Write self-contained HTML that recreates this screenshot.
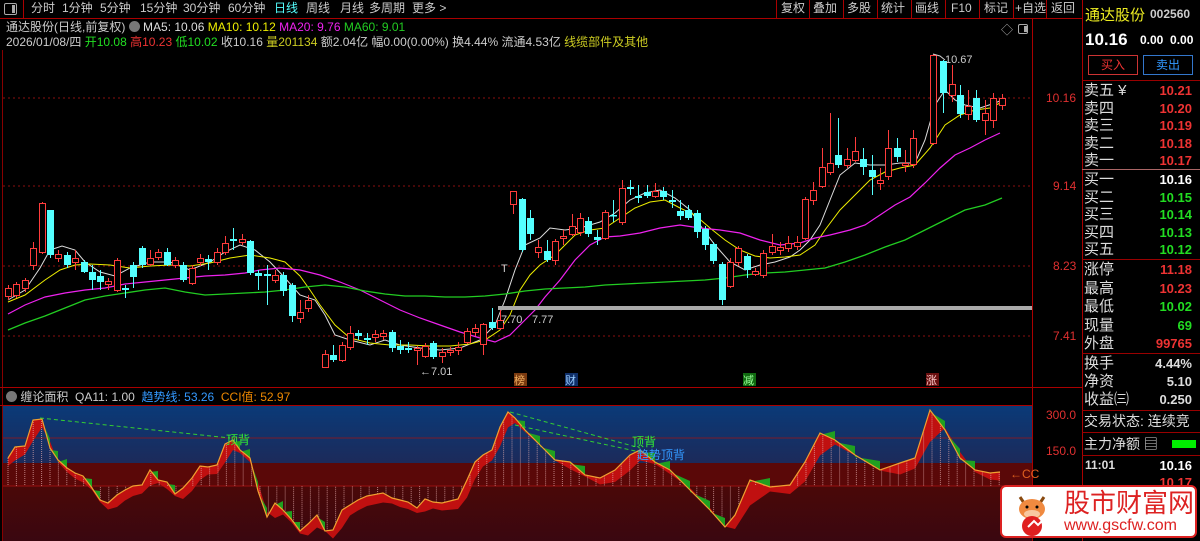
<!DOCTYPE html>
<html><head><meta charset="utf-8">
<style>
*{margin:0;padding:0;box-sizing:border-box}
body{width:1200px;height:541px;background:#000;overflow:hidden;position:relative;font-family:"Liberation Sans","Noto Sans CJK SC",sans-serif;font-size:12px;color:#ccc}
.a{position:absolute;white-space:nowrap}
.tb{position:absolute;top:0;height:18px;line-height:17px;font-size:12px;color:#ccc}
.rp div{position:absolute;white-space:nowrap}
.lab{left:1084px;font-size:15px;color:#ddd;line-height:17px}
.val{right:8px;font-size:13px;font-weight:bold;text-align:right;line-height:17px}
.sep{left:1082px;width:118px;height:1px;background:#900}
</style></head><body>
<svg id="ch" width="1200" height="541" style="position:absolute;left:0;top:0">
<defs>
<linearGradient id="bg1" x1="0" y1="0" x2="0" y2="1"><stop offset="0" stop-color="#0a3a78"/><stop offset="1" stop-color="#1c2a5a"/></linearGradient>
<linearGradient id="bg2" x1="0" y1="0" x2="0" y2="1"><stop offset="0" stop-color="#4a0808"/><stop offset="1" stop-color="#3a0710"/></linearGradient>
</defs>
<line x1="0" y1="18.5" x2="1082" y2="18.5" stroke="#a00" />
<line x1="1032.5" y1="18" x2="1032.5" y2="541" stroke="#a00"/>
<line x1="1082.5" y1="0" x2="1082.5" y2="541" stroke="#a00"/>
<line x1="2.5" y1="50" x2="2.5" y2="541" stroke="#800"/>
<line x1="0" y1="387.5" x2="1082" y2="387.5" stroke="#a00"/>
<line x1="0" y1="405.5" x2="1032" y2="405.5" stroke="#a00"/>
<g stroke="#8a1010" stroke-dasharray="2,3">
<line x1="3" y1="98" x2="1032" y2="98"/><line x1="3" y1="186" x2="1032" y2="186"/>
<line x1="3" y1="266" x2="1032" y2="266"/><line x1="3" y1="336" x2="1032" y2="336"/>
</g>
<g fill="#e03030" font-size="12">
<text x="1046" y="102">10.16</text><text x="1053" y="190">9.14</text><text x="1053" y="270">8.23</text><text x="1053" y="340">7.41</text>
<text x="1046" y="419">300.0</text><text x="1046" y="455">150.0</text>
</g>
<rect x="3" y="406" width="1029" height="57" fill="url(#bg1)"/>
<rect x="3" y="463" width="1029" height="23" fill="#5a0808"/>
<rect x="3" y="486" width="1029" height="55" fill="url(#bg2)"/>
<line x1="3" y1="438" x2="1032" y2="438" stroke="#7a1a2a"/>
<line x1="3" y1="486" x2="1032" y2="486" stroke="#9a1010"/>
<g id="ind"></g>
<g id="mas" fill="none"></g>
<g id="cdl"></g>
<rect x="498" y="306" width="534" height="4" fill="#aaa"/>
<g fill="#ccc" font-size="11">
<text x="420" y="375">←7.01</text><text x="501" y="323">7.70</text><text x="532" y="323">7.77</text>
<text x="945" y="63">10.67</text><text x="501" y="272">T</text>
</g>
<polyline points="933,54 940,56 945,60" stroke="#ccc" fill="none"/>
<g font-size="11">
<rect x="514" y="373" width="13" height="13" fill="#7a3a10"/><text x="514" y="384" fill="#f0b060">榜</text>
<rect x="565" y="373" width="13" height="13" fill="#10306a"/><text x="565" y="384" fill="#9cf">财</text>
<rect x="743" y="373" width="13" height="13" fill="#106a10"/><text x="743" y="384" fill="#9f9">减</text>
<rect x="926" y="373" width="13" height="13" fill="#6a1010"/><text x="926" y="384" fill="#fcc">涨</text>
</g>
<g font-size="12"><text x="1010" y="478" fill="#e06020">←CC</text></g>
</svg>

<div class="a" style="left:4px;top:3px;width:13px;height:12px;border:1px solid #aaa;border-radius:2px"><div class="a" style="left:7px;top:1px;width:3px;height:8px;background:#aaa"></div></div>
<div class="a" style="left:23px;top:0;width:1px;height:18px;background:#a00"></div>
<div class="tb" style="left:31px">分时</div><div class="tb" style="left:62px">1分钟</div><div class="tb" style="left:100px">5分钟</div><div class="tb" style="left:140px">15分钟</div><div class="tb" style="left:183px">30分钟</div><div class="tb" style="left:228px">60分钟</div><div class="tb" style="left:274px;color:#5ff">日线</div><div class="tb" style="left:306px">周线</div><div class="tb" style="left:340px">月线</div><div class="tb" style="left:369px">多周期</div><div class="tb" style="left:412px">更多 &gt;</div>
<div class="tb" style="left:776px;width:306px;height:19px;border-bottom:1px solid #a00"></div>
<div class="tb" style="left:781px">复权</div><div class="tb" style="left:813px">叠加</div><div class="tb" style="left:847px">多股</div><div class="tb" style="left:881px">统计</div><div class="tb" style="left:915px">画线</div><div class="tb" style="left:951px">F10</div><div class="tb" style="left:984px">标记</div><div class="tb" style="left:1015px">+自选</div><div class="tb" style="left:1051px">返回</div>
<div class="a" style="left:776px;top:0;width:1px;height:18px;background:#a00"></div><div class="a" style="left:809px;top:0;width:1px;height:18px;background:#a00"></div><div class="a" style="left:843px;top:0;width:1px;height:18px;background:#a00"></div><div class="a" style="left:877px;top:0;width:1px;height:18px;background:#a00"></div><div class="a" style="left:911px;top:0;width:1px;height:18px;background:#a00"></div><div class="a" style="left:945px;top:0;width:1px;height:18px;background:#a00"></div><div class="a" style="left:979px;top:0;width:1px;height:18px;background:#a00"></div><div class="a" style="left:1013px;top:0;width:1px;height:18px;background:#a00"></div><div class="a" style="left:1046px;top:0;width:1px;height:18px;background:#a00"></div>
<div class="a" style="left:1001px;top:21px;color:#aaa;font-size:12px">◇</div>
<div class="a" style="left:1018px;top:24px;width:10px;height:10px;border:1px solid #aaa;border-radius:2px"><div class="a" style="left:5px;top:1px;width:3px;height:6px;background:#aaa"></div></div>

<div class="a" style="left:6px;top:19px;font-size:12px;line-height:16px">通达股份(日线,前复权) <span style="display:inline-block;width:11px;height:11px;border-radius:6px;background:#777;vertical-align:-1px"></span> <span style="color:#ddd">MA5: 10.06</span> <span style="color:#ee0">MA10: 10.12</span> <span style="color:#e2e">MA20: 9.76</span> <span style="color:#2c2">MA60: 9.01</span></div>
<div class="a" style="left:6px;top:35px;font-size:12px;line-height:15px;color:#ccc">2026/01/08/四 <span style="color:#2d2">开10.08</span> <span style="color:#e33">高10.23</span> <span style="color:#2d2">低10.02</span> 收10.16 <span style="color:#cc2">量201134</span> 额2.04亿 幅0.00(0.00%) 换4.44% 流通4.53亿 <span style="color:#cc2">线缆部件及其他</span></div>

<div class="a" style="left:6px;top:390px;font-size:12px;line-height:14px;color:#ccc"><span style="display:inline-block;width:11px;height:11px;border-radius:6px;background:#777;vertical-align:-1px"></span> 缠论面积 &nbsp;QA11: 1.00 &nbsp;<span style="color:#39f">趋势线: 53.26</span> &nbsp;<span style="color:#e80">CCI值: 52.97</span></div>
<div class="a" style="left:226px;top:431px;color:#3e3;font-size:12px">顶背</div>
<div class="a" style="left:632px;top:433px;color:#3e3;font-size:12px">顶背</div>
<div class="a" style="left:637px;top:446px;color:#39f;font-size:12px">趋势顶背</div>

<div class="rp">
<div style="left:1085px;top:4px;font-size:15px;color:#ee2">通达股份</div>
<div style="left:1150px;top:7px;font-size:12px;color:#ccc;font-weight:bold">002560</div>
<div style="left:1085px;top:30px;font-size:17px;color:#fff;font-weight:bold">10.16</div>
<div style="left:1140px;top:33px;font-size:12px;color:#fff;font-weight:bold">0.00 &nbsp;0.00</div>
<div style="left:1088px;top:55px;width:50px;height:20px;border:1px solid #c33;color:#e33;text-align:center;line-height:18px;font-size:12px">买入</div>
<div style="left:1143px;top:55px;width:50px;height:20px;border:1px solid #37c;color:#39f;text-align:center;line-height:18px;font-size:12px">卖出</div>
<div class="sep" style="top:80px"></div>
<div class="lab" style="top:82px">卖五 ¥</div><div class="val" style="top:82px;color:#e33">10.21</div>
<div class="lab" style="top:100px">卖四</div><div class="val" style="top:100px;color:#e33">10.20</div>
<div class="lab" style="top:117px">卖三</div><div class="val" style="top:117px;color:#e33">10.19</div>
<div class="lab" style="top:135px">卖二</div><div class="val" style="top:135px;color:#e33">10.18</div>
<div class="lab" style="top:152px">卖一</div><div class="val" style="top:152px;color:#e33">10.17</div>
<div class="sep" style="top:169px;background:#a66"></div>
<div class="lab" style="top:171px">买一</div><div class="val" style="top:171px;color:#fff">10.16</div>
<div class="lab" style="top:189px">买二</div><div class="val" style="top:189px;color:#2d2">10.15</div>
<div class="lab" style="top:206px">买三</div><div class="val" style="top:206px;color:#2d2">10.14</div>
<div class="lab" style="top:224px">买四</div><div class="val" style="top:224px;color:#2d2">10.13</div>
<div class="lab" style="top:241px">买五</div><div class="val" style="top:241px;color:#2d2">10.12</div>
<div class="sep" style="top:259px"></div>
<div class="lab" style="top:261px">涨停</div><div class="val" style="top:261px;color:#e33">11.18</div>
<div class="lab" style="top:280px">最高</div><div class="val" style="top:280px;color:#e33">10.23</div>
<div class="lab" style="top:298px">最低</div><div class="val" style="top:298px;color:#2d2">10.02</div>
<div class="lab" style="top:317px">现量</div><div class="val" style="top:317px;color:#2d2">69</div>
<div class="lab" style="top:335px">外盘</div><div class="val" style="top:335px;color:#e33">99765</div>
<div class="sep" style="top:353px"></div>
<div class="lab" style="top:355px">换手</div><div class="val" style="top:355px;color:#ddd">4.44%</div>
<div class="lab" style="top:373px">净资</div><div class="val" style="top:373px;color:#ddd">5.10</div>
<div class="lab" style="top:391px">收益㈢</div><div class="val" style="top:391px;color:#ddd">0.250</div>
<div class="sep" style="top:410px"></div>
<div class="lab" style="top:413px;font-size:14px">交易状态: 连续竞</div>
<div class="sep" style="top:432px"></div>
<div class="lab" style="top:436px;font-size:14px">主力净额 ▤</div>
<div style="left:1172px;top:440px;width:24px;height:8px;background:#0e0"></div>
<div class="sep" style="top:455px"></div>
<div style="left:1085px;top:458px;font-size:12px;color:#ddd;font-weight:bold">11:01</div><div class="val" style="top:457px;color:#fff">10.16</div>
<div class="val" style="top:474px;color:#e33">10.17</div>
</div>

<div class="a" style="left:1000px;top:485px;width:197px;height:53px;background:#fff;border:2px solid #d22;border-radius:6px">
<svg width="44" height="48" style="position:absolute;left:8px;top:2px">
<path d="M10 8 L14 14 M34 8 L30 14" stroke="#8a4a10" stroke-width="3" fill="none"/>
<ellipse cx="22" cy="20" rx="13" ry="10" fill="#f08a40"/>
<ellipse cx="22" cy="25" rx="8" ry="4" fill="#f8c8a0"/>
<circle cx="17" cy="18" r="1.5" fill="#000"/><circle cx="27" cy="18" r="1.5" fill="#000"/>
<circle cx="22" cy="37" r="10" fill="#e02020"/>
<path d="M18 38 L24 32 L28 36 L36 28" stroke="#fff" stroke-width="2" fill="none"/>
</svg>
<div class="a" style="left:62px;top:1px;font-size:26px;color:#d22;line-height:30px">股市财富网</div>
<div class="a" style="left:62px;top:30px;font-size:16px;color:#d22;line-height:18px">www.gscfw.com</div>
</div>

<script>
(function(){
var NS="http://www.w3.org/2000/svg";
function el(p,t,a){var e=document.createElementNS(NS,t);for(var k in a)e.setAttribute(k,a[k]);p.appendChild(e);return e;}
var C=[[8,288,296,285,300,'r'],[16,284,295,282,298,'r'],[25,280,288,278,292,'r'],[33,248,265,242,270,'r'],[42,203,252,202,254,'r'],[50,210,255,210,258,'c'],[58,254,258,250,262,'r'],[67,255,265,252,268,'c'],[75,258,262,250,270,'r'],[84,262,272,260,273,'c'],[92,272,280,265,290,'c'],[100,276,282,270,290,'c'],[108,281,284,278,290,'r'],[117,260,290,258,292,'r'],[125,288,290,285,298,'c'],[133,265,277,262,288,'c'],[142,248,265,246,268,'c'],[150,258,264,250,266,'r'],[158,252,257,249,260,'r'],[167,252,265,248,266,'c'],[175,260,265,257,268,'r'],[183,265,280,262,282,'c'],[192,268,283,265,285,'r'],[200,258,262,254,266,'r'],[208,259,262,255,270,'c'],[217,252,262,248,265,'r'],[225,243,252,236,255,'r'],[233,239,241,228,250,'c'],[242,239,242,234,245,'r'],[250,241,273,240,275,'c'],[258,273,276,270,290,'c'],[267,274,276,265,305,'c'],[275,275,280,270,283,'r'],[283,275,291,272,296,'c'],[292,285,316,283,322,'c'],[300,312,318,300,323,'r'],[308,300,308,295,312,'r'],[325,354,367,350,368,'r'],[333,355,360,345,362,'c'],[342,345,360,342,362,'r'],[350,333,347,326,350,'r'],[358,333,336,330,340,'c'],[367,338,340,333,345,'c'],[375,334,337,330,342,'r'],[383,333,336,330,340,'r'],[392,332,348,330,352,'c'],[400,346,350,340,354,'c'],[408,348,350,342,353,'c'],[417,348,350,346,365,'r'],[425,346,356,343,358,'r'],[433,343,357,341,359,'c'],[442,352,356,348,363,'r'],[450,350,352,347,356,'r'],[458,347,350,342,355,'r'],[467,331,342,328,344,'r'],[475,328,332,324,336,'r'],[483,324,344,323,355,'r'],[492,322,328,308,330,'c'],[500,320,328,310,330,'r'],[513,191,204,191,214,'r'],[522,199,250,198,252,'c'],[530,218,234,210,240,'c'],[538,247,252,240,258,'r'],[547,251,260,240,262,'c'],[555,241,260,239,265,'r'],[563,236,238,230,245,'r'],[572,226,234,214,236,'r'],[580,218,232,213,236,'r'],[588,221,234,217,237,'c'],[597,237,240,230,245,'c'],[605,212,238,210,240,'r'],[613,215,216,200,222,'c'],[622,188,222,180,225,'r'],[630,187,189,180,195,'c'],[638,196,198,185,203,'c'],[647,192,196,185,198,'c'],[655,191,196,183,198,'r'],[663,191,197,187,200,'c'],[672,200,202,190,208,'c'],[680,211,216,200,220,'c'],[688,210,218,205,220,'c'],[697,213,232,210,238,'c'],[705,229,245,226,250,'c'],[713,244,261,242,264,'c'],[722,264,300,262,305,'c'],[730,262,286,258,288,'r'],[738,248,262,246,266,'r'],[747,256,270,254,278,'c'],[755,271,274,268,276,'r'],[763,253,275,250,278,'r'],[772,246,252,234,255,'r'],[780,247,250,242,255,'r'],[788,243,248,236,252,'r'],[797,242,246,236,250,'r'],[805,199,238,197,240,'r'],[813,190,200,182,205,'r'],[822,167,186,148,188,'r'],[830,163,172,113,175,'r'],[838,155,165,118,168,'c'],[847,159,165,148,168,'r'],[855,151,160,137,162,'r'],[863,159,167,148,175,'c'],[872,170,177,155,195,'c'],[880,180,183,168,190,'r'],[888,148,176,130,180,'r'],[897,148,157,138,162,'c'],[905,163,165,150,172,'r'],[913,138,164,130,168,'r'],[933,55,143,54,145,'r'],[943,61,93,60,113,'c'],[952,84,95,65,102,'r'],[960,95,114,85,118,'c'],[968,106,114,90,120,'r'],[976,98,120,90,122,'c'],[985,113,120,100,135,'r'],[993,98,120,93,128,'r'],[1002,98,105,94,110,'r']];
var g=document.getElementById('cdl');
C.forEach(function(c){var col=c[5]=='r'?'#ff3c3c':'#54ffff';
el(g,'line',{x1:c[0]+.5,x2:c[0]+.5,y1:c[3],y2:c[4],stroke:col});
if(c[5]=='r')el(g,'rect',{x:c[0]-2.5,y:c[1]+.5,width:6,height:Math.max(1,c[2]-c[1]),fill:'#000',stroke:col});
else el(g,'rect',{x:c[0]-3,y:c[1],width:7,height:Math.max(1.5,c[2]-c[1]),fill:col});});
var m=document.getElementById('mas');
function pl(pts,col,w){el(m,'polyline',{points:pts,stroke:col,'stroke-width':w||1});}
pl("8,300 25,290 40,268 50,250 62,246 75,250 85,262 100,272 115,276 130,268 150,262 170,262 190,270 210,262 225,252 240,245 255,250 270,262 285,278 300,295 315,300 325,315 335,335 350,340 370,345 385,340 400,345 420,348 440,350 460,348 480,340 495,325 505,300 515,270 525,245 540,238 550,228 565,230 580,228 600,222 615,213 630,200 645,193 660,190 675,198 690,210 700,225 715,245 730,262 745,270 760,265 775,262 790,257 800,250 810,240 820,225 830,200 840,175 855,163 870,165 885,165 900,163 915,163 925,140 935,105 945,90 955,100 965,105 980,108 995,103 1002,100","#ddd");
pl("8,302 25,295 45,280 60,270 75,265 90,264 110,265 130,268 150,266 170,265 190,266 210,263 230,258 250,255 270,258 285,262 300,276 310,290 320,305 335,325 350,338 370,343 390,345 410,345 430,346 450,346 470,344 485,340 500,330 510,315 520,290 530,275 540,265 555,255 565,245 575,235 590,230 605,228 620,218 635,208 650,202 665,200 680,208 695,215 710,228 725,240 740,250 755,256 770,258 785,257 800,255 815,245 825,230 840,210 855,195 870,180 885,172 900,168 915,165 930,148 945,125 960,115 975,110 990,108 1002,102","#ee0");
pl("8,314 25,305 45,297 65,293 85,290 105,288 125,284 145,282 165,280 185,278 205,276 225,275 245,273 260,270 280,268 300,270 320,275 340,282 360,290 380,300 400,310 420,318 440,325 460,332 480,338 495,342 510,335 520,325 535,310 545,297 560,280 575,260 590,245 605,237 620,236 640,233 660,228 680,225 700,228 720,230 740,233 760,240 780,245 800,243 815,238 830,235 850,230 865,225 880,215 895,205 910,197 925,183 940,168 955,155 970,148 985,140 1000,133","#e2e",1.2);
pl("8,330 25,323 45,316 65,308 85,300 105,296 125,293 145,290 165,288 185,292 205,295 225,294 245,293 265,292 285,290 305,287 325,285 345,287 365,291 385,294 405,296 425,296 445,297 465,297 485,296 505,294 525,291 545,289 565,288 585,287 605,285 625,284 645,283 665,282 685,281 705,280 725,278 745,275 765,273 785,272 805,270 825,268 845,262 865,255 885,247 905,240 925,230 945,220 965,210 985,205 1002,198","#2c2",1.3);
var I=[[8,458],[15,447],[25,446],[33,420],[42,419],[50,448],[58,460],[67,468],[75,473],[83,476],[92,488],[100,500],[108,503],[117,495],[125,490],[133,486],[142,485],[150,470],[158,480],[167,482],[175,494],[183,488],[192,478],[200,466],[208,467],[217,465],[225,444],[233,440],[240,450],[250,458],[258,491],[267,517],[275,503],[283,510],[292,520],[300,531],[308,524],[317,515],[325,531],[333,530],[342,510],[350,505],[358,500],[367,496],[383,493],[392,498],[400,500],[408,502],[417,508],[425,499],[433,502],[442,503],[458,499],[467,480],[475,462],[483,455],[492,450],[500,427],[508,412],[515,418],[525,430],[540,445],[555,460],[570,462],[585,475],[600,478],[615,470],[630,455],[640,450],[655,462],[670,470],[690,490],[710,510],[725,527],[735,515],[750,480],[770,487],[790,485],[805,462],[820,433],[835,440],[855,455],[880,470],[900,463],[915,458],[930,410],[945,430],[960,458],[975,470],[990,473],[1000,472]];
var ig=document.getElementById('ind');
function yAt(x){for(var i=1;i<I.length;i++){if(x<=I[i][0]){var a=I[i-1],b=I[i];return a[1]+(b[1]-a[1])*(x-a[0])/(b[0]-a[0]);}}return I[I.length-1][1];}
var tp="";I.forEach(function(p){tp+=p[0]+","+p[1]+" ";});
var lag=I.map(function(p,i){var q=I[Math.max(0,i-1)];return [p[0],(p[1]+q[1])/2+8];});
var poly=tp;for(var i=lag.length-1;i>=0;i--)poly+=lag[i][0]+","+lag[i][1]+" ";
el(ig,'polygon',{points:poly,fill:'#c01010'});
for(var x=8;x<1002;x+=8.4){var y=yAt(x);el(ig,'line',{x1:x,x2:x,y1:y,y2:486,stroke:'#e8b0b0','stroke-width':1,'stroke-dasharray':'1,1',opacity:.7});}
for(var i=1;i<I.length;i++){if(I[i][1]>I[i-1][1]+6){el(ig,'polygon',{points:I[i-1][0]+","+I[i-1][1]+" "+I[i][0]+","+I[i][1]+" "+I[i][0]+","+(I[i][1]-9)+" "+I[i-1][0]+","+(I[i-1][1]+2),fill:'#20a020'});}}
el(ig,'polyline',{points:tp,fill:'none',stroke:'#f0a030','stroke-width':1.2});
el(ig,'line',{x1:40,y1:418,x2:230,y2:438,stroke:'#3c3','stroke-dasharray':'4,3'});
el(ig,'line',{x1:510,y1:412,x2:640,y2:448,stroke:'#3c3','stroke-dasharray':'4,3'});
el(ig,'line',{x1:515,y1:425,x2:640,y2:452,stroke:'#3c3','stroke-dasharray':'4,3'});
})();
</script>
</body></html>
